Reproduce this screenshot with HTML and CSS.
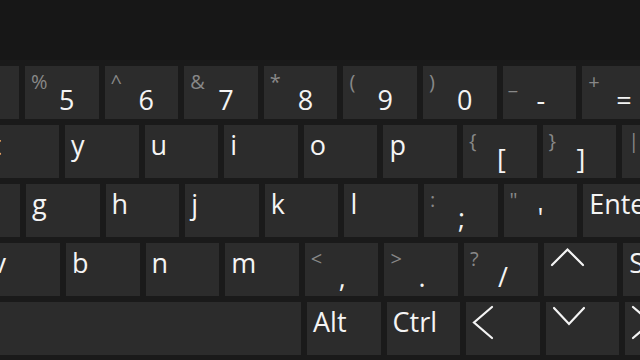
FILE: index.html
```html
<!DOCTYPE html>
<html lang="en">
<head>
  <meta charset="UTF-8">
  <meta name="viewport" content="width=device-width, initial-scale=1.0">
  <title>Touch Keyboard</title>
  <link rel="stylesheet" href="styles.css">
</head>
<body>
  <div class="keyboard">
    <div class="row row-num">
      <div class="key dual"></div>
      <div class="key dual"><span class="shift">%</span><span class="main">5</span></div>
      <div class="key dual"><span class="shift">^</span><span class="main">6</span></div>
      <div class="key dual"><span class="shift">&amp;</span><span class="main">7</span></div>
      <div class="key dual"><span class="shift">*</span><span class="main">8</span></div>
      <div class="key dual"><span class="shift">(</span><span class="main">9</span></div>
      <div class="key dual"><span class="shift">)</span><span class="main">0</span></div>
      <div class="key dual"><span class="shift">_</span><span class="main">-</span></div>
      <div class="key dual"><span class="shift">+</span><span class="main">=</span></div>
    </div>
    <div class="row row-top">
      <div class="key letter">t</div>
      <div class="key letter">y</div>
      <div class="key letter">u</div>
      <div class="key letter">i</div>
      <div class="key letter">o</div>
      <div class="key letter">p</div>
      <div class="key dual"><span class="shift">{</span><span class="main">[</span></div>
      <div class="key dual"><span class="shift">}</span><span class="main">]</span></div>
      <div class="key dual"><span class="shift">|</span><span class="main">\</span></div>
    </div>
    <div class="row row-home">
      <div class="key letter"></div>
      <div class="key letter">g</div>
      <div class="key letter">h</div>
      <div class="key letter">j</div>
      <div class="key letter">k</div>
      <div class="key letter">l</div>
      <div class="key dual"><span class="shift">:</span><span class="main">;</span></div>
      <div class="key dual"><span class="shift">"</span><span class="main">'</span></div>
      <div class="key letter wide">Enter</div>
    </div>
    <div class="row row-bottom">
      <div class="key letter">v</div>
      <div class="key letter">b</div>
      <div class="key letter">n</div>
      <div class="key letter">m</div>
      <div class="key dual"><span class="shift">&lt;</span><span class="main">,</span></div>
      <div class="key dual"><span class="shift">&gt;</span><span class="main">.</span></div>
      <div class="key dual"><span class="shift">?</span><span class="main">/</span></div>
      <div class="key arrow">
        <svg viewBox="0 0 74 53" width="74" height="53"><polyline points="8,22 23.5,6.5 39,22"/></svg>
      </div>
      <div class="key letter wide">Shift</div>
    </div>
    <div class="row row-mod">
      <div class="key space"></div>
      <div class="key letter">Alt</div>
      <div class="key letter">Ctrl</div>
      <div class="key arrow">
        <svg viewBox="0 0 74 53" width="74" height="53"><polyline points="26,5 8,20.5 26,36"/></svg>
      </div>
      <div class="key arrow">
        <svg viewBox="0 0 74 53" width="74" height="53"><polyline points="8,6 23,22 38,6"/></svg>
      </div>
      <div class="key arrow">
        <svg viewBox="0 0 74 53" width="74" height="53"><polyline points="8,5 26,20.5 8,36"/></svg>
      </div>
    </div>
  </div>
</body>
</html>
```

FILE: styles.css
```css
body {
  margin: 0;
  width: 640px;
  height: 360px;
  overflow: hidden;
  background-color: #171717;
  font-family: 'Open Sans', 'Noto Sans', sans-serif;
  color: #f4f4f4;
}
.keyboard {
  margin-top: 60px;
  padding-top: 6px;
  height: 294px;
  background-color: #1a1a1a;
}
.row {
  display: flex;
  gap: 6px;
  margin-bottom: 6px;
}
.row-num {
  margin-left: -54.6px;
}
.row-top {
  margin-left: -14.6px;
}
.row-home {
  margin-left: -53.6px;
}
.row-bottom {
  margin-left: -13.6px;
}
.key {
  flex-shrink: 0;
  width: 73.6px;
  height: 53px;
  background-color: #2c2c2c;
  box-sizing: border-box;
  overflow: hidden;
  white-space: nowrap;
}
.key.wide {
  width: 110px;
}
.key.space {
  width: 301px;
}
.letter {
  padding: 2px 0 0 6px;
  font-size: 27px;
  line-height: 35px;
}
.dual {
  padding: 4px 0 0 6px;
}
.dual .shift {
  display: block;
  font-size: 20px;
  line-height: 24px;
  color: #888;
}
.dual .main {
  display: block;
  margin-left: 28px;
  font-size: 27px;
  line-height: 11px;
}
.arrow svg {
  display: block;
  fill: none;
  stroke: #f4f4f4;
  stroke-width: 2.2;
  stroke-linecap: round;
  stroke-linejoin: miter;
}
```
